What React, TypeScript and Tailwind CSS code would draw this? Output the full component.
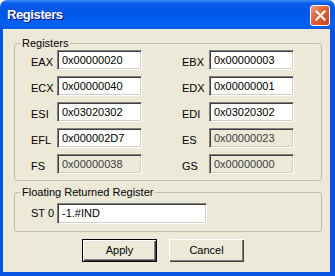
import React from 'react';

interface Reg {
  name: string;
  value: string;
  disabled?: boolean;
}

const rows: [Reg, Reg][] = [
  [{ name: 'EAX', value: '0x00000020' }, { name: 'EBX', value: '0x00000003' }],
  [{ name: 'ECX', value: '0x00000040' }, { name: 'EDX', value: '0x00000001' }],
  [{ name: 'ESI', value: '0x03020302' }, { name: 'EDI', value: '0x03020302' }],
  [{ name: 'EFL', value: '0x000002D7' }, { name: 'ES', value: '0x00000023', disabled: true }],
  [{ name: 'FS', value: '0x00000038', disabled: true }, { name: 'GS', value: '0x00000000', disabled: true }],
];

const sunken =
  'flex items-center pl-[4px] leading-[13px] border border-t-[#808080] border-l-[#808080] border-b-white border-r-white shadow-[inset_1px_1px_0_#404040,inset_-1px_-1px_0_#D4D0C8]';

function Field({ value, disabled }: { value: string; disabled?: boolean }) {
  return (
    <div
      className={`${sunken} h-[20px] w-[85px] ${
        disabled ? 'bg-[#ECE9D8] text-[#3c3c3c]' : 'bg-white text-black'
      }`}
    >
      {value}
    </div>
  );
}

function RegCell({ reg }: { reg: Reg }) {
  return (
    <div className="flex items-start justify-between">
      <span className="pt-[6px] leading-[13px]">{reg.name}</span>
      <Field value={reg.value} disabled={reg.disabled} />
    </div>
  );
}

export default function App() {
  return (
    <div
      className="w-[335px] h-[276px] flex flex-col text-[11px] text-black"
      style={{ fontFamily: '"Liberation Sans", Arial, sans-serif' }}
    >
      {/* Title bar */}
      <div className="h-[29px] shrink-0 flex items-center justify-between pl-[7px] pr-[5px] pt-[1px] rounded-t-[7px] bg-[linear-gradient(180deg,#3D8CF7_0%,#0A5CEC_12%,#0055E6_45%,#0461F5_85%,#0A58E2_100%)]">
        <span className="text-white font-bold text-[13px] tracking-[-0.4px] [text-shadow:1px_1px_#0A1883]">
          Registers
        </span>
        <button className="w-[20px] h-[21px] rounded-[3px] border border-white flex items-center justify-center bg-[linear-gradient(135deg,#EE9A7C_0%,#E0603A_45%,#C8441E_100%)]">
          <svg width="11" height="11" viewBox="0 0 11 11">
            <path d="M1.5 1.5 L9.5 9.5 M9.5 1.5 L1.5 9.5" stroke="white" strokeWidth="2.2" strokeLinecap="square" />
          </svg>
        </button>
      </div>

      {/* Client area */}
      <div className="flex-1 flex flex-col bg-[#ECE9D8] border-l-[3px] border-r-[5px] border-b-[4px] border-[#0853E0] pt-[8px] pl-[11px]">
        <fieldset className="w-[308px] border border-[#C2BFAF] rounded-[3px] pb-[6px]">
          <legend className="ml-[5px] px-[2px] leading-[13px]">Registers</legend>
          <div className="grid grid-cols-[111px_112px] gap-x-[40px] gap-y-[6px] pl-[16px]">
            {rows.map(([a, b]) => (
              <React.Fragment key={a.name}>
                <RegCell reg={a} />
                <RegCell reg={b} />
              </React.Fragment>
            ))}
          </div>
        </fieldset>

        <fieldset className="mt-[5px] w-[308px] border border-[#C2BFAF] rounded-[3px] pt-[4px] pb-[7px]">
          <legend className="ml-[5px] px-[2px] leading-[13px]">Floating Returned Register</legend>
          <div className="flex items-start pl-[16px]">
            <span className="w-[26px] pt-[4px] leading-[13px]">ST 0</span>
            <div className={`${sunken} h-[21px] w-[150px] bg-white`}>-1.#IND</div>
          </div>
        </fieldset>

        <div className="flex gap-[12px] pl-[68px] mt-[7px]">
          <button className="w-[75px] h-[23px] border border-black bg-[#ECE9D8] shadow-[inset_1px_1px_0_#fff,inset_-1px_-1px_0_#404040,inset_-2px_-2px_0_#808080] leading-[13px]">
            Apply
          </button>
          <button className="w-[75px] h-[23px] bg-[#ECE9D8] shadow-[inset_1px_1px_0_#fff,inset_-1px_-1px_0_#404040,inset_-2px_-2px_0_#808080] leading-[13px]">
            Cancel
          </button>
        </div>
      </div>
    </div>
  );
}
